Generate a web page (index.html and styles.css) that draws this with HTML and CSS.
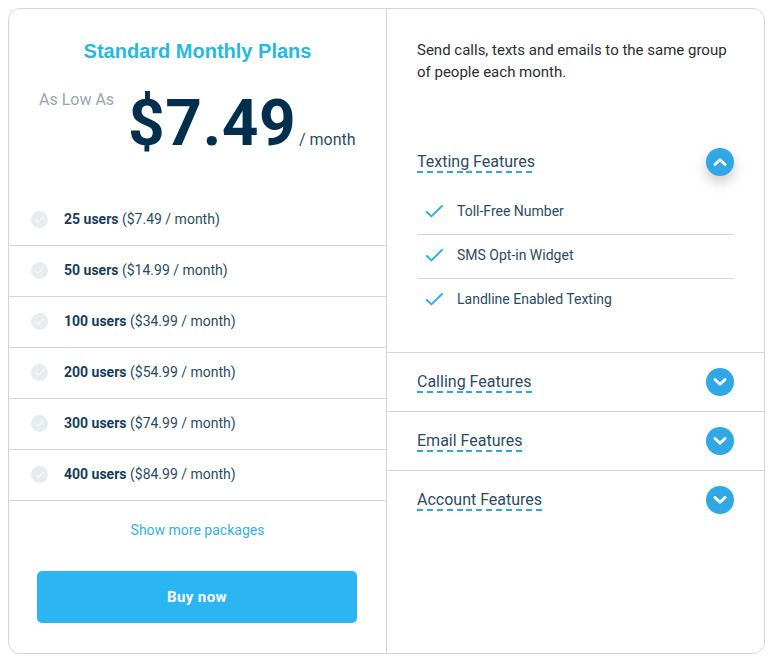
FILE: index.html
```html
<!DOCTYPE html>
<html lang="en">
<head>
  <meta charset="UTF-8">
  <meta name="viewport" content="width=device-width, initial-scale=1.0">
  <title>Standard Monthly Plans</title>
  <link rel="stylesheet" href="styles.css">
</head>
<body>
  <!-- shared icons -->
  <svg class="sprite" width="0" height="0">
    <symbol id="tick" viewBox="0 0 18 14">
      <path d="M1.8 8L6.4 12.4L17 2" />
    </symbol>
    <symbol id="chevron" viewBox="0 0 14 8">
      <path d="M2 1.4L7 6.2L12 1.4" />
    </symbol>
  </svg>

  <div class="pricing">
    <section class="plans">
      <h2>Standard Monthly Plans</h2>
      <div class="price">
        <span class="price-label">As Low As</span>
        <span class="price-value">$7.49</span>
        <span class="price-period">/ month</span>
      </div>

      <ul class="packages">
        <li><span class="dot"><svg><use href="#tick" /></svg></span><p><b>25 users</b> ($7.49 / month)</p></li>
        <li><span class="dot"><svg><use href="#tick" /></svg></span><p><b>50 users</b> ($14.99 / month)</p></li>
        <li><span class="dot"><svg><use href="#tick" /></svg></span><p><b>100 users</b> ($34.99 / month)</p></li>
        <li><span class="dot"><svg><use href="#tick" /></svg></span><p><b>200 users</b> ($54.99 / month)</p></li>
        <li><span class="dot"><svg><use href="#tick" /></svg></span><p><b>300 users</b> ($74.99 / month)</p></li>
        <li><span class="dot"><svg><use href="#tick" /></svg></span><p><b>400 users</b> ($84.99 / month)</p></li>
      </ul>

      <a class="more" href="#">Show more packages</a>
      <button class="buy">Buy now</button>
    </section>

    <section class="features">
      <p class="intro">Send calls, texts and emails to the same group of people each month.</p>

      <div class="group open">
        <div class="group-head">
          <h3>Texting Features</h3>
          <button class="toggle"><svg><use href="#chevron" /></svg></button>
        </div>
        <ul class="checks">
          <li><svg><use href="#tick" /></svg>Toll-Free Number</li>
          <li><svg><use href="#tick" /></svg>SMS Opt-in Widget</li>
          <li><svg><use href="#tick" /></svg>Landline Enabled Texting</li>
        </ul>
      </div>

      <div class="group">
        <div class="group-head">
          <h3>Calling Features</h3>
          <button class="toggle"><svg><use href="#chevron" /></svg></button>
        </div>
      </div>

      <div class="group">
        <div class="group-head">
          <h3>Email Features</h3>
          <button class="toggle"><svg><use href="#chevron" /></svg></button>
        </div>
      </div>

      <div class="group">
        <div class="group-head">
          <h3>Account Features</h3>
          <button class="toggle"><svg><use href="#chevron" /></svg></button>
        </div>
      </div>
    </section>
  </div>

  <script>
    document.querySelectorAll('.toggle').forEach(function (btn) {
      btn.addEventListener('click', function () {
        btn.closest('.group').classList.toggle('open');
      });
    });
  </script>
</body>
</html>
```

FILE: styles.css
```css
* {
  box-sizing: border-box;
}

body {
  margin: 8px;
  background: #fff;
  color: #2b4b63;
  font-family: Roboto, sans-serif;
  font-size: 14px;
}

h2, h3, p, ul {
  margin: 0;
  padding: 0;
}

ul {
  list-style: none;
}

button {
  border: none;
  padding: 0;
  cursor: pointer;
}

svg {
  fill: none;
  stroke-linecap: round;
  stroke-linejoin: round;
}

.sprite {
  position: absolute;
}

.pricing {
  display: flex;
  width: 757px;
  height: 646px;
  border: 1px solid #d3d6d8;
  border-radius: 12px;
}

/* left column */
.plans {
  width: 377px;
  display: flex;
  flex-direction: column;
}

.plans h2 {
  margin-top: 30px;
  color: #27b9dc;
  font-family: "Liberation Sans", Arial, sans-serif;
  font-size: 20px;
  line-height: 24px;
  text-align: center;
}

.price {
  display: flex;
  height: 132px;
  padding: 18px 0 0 30px;
}

.price-label {
  width: 89px;
  padding-top: 9px;
  color: #98a6b0;
  font-size: 16px;
  line-height: 20px;
}

.price-value {
  width: 171px;
  color: #022f4d;
  font-size: 64px;
  font-weight: 700;
  letter-spacing: 0.6px;
  line-height: 86px;
}

.price-period {
  padding-top: 49px;
  font-size: 16px;
  line-height: 20px;
}

.packages li {
  display: flex;
  align-items: center;
  height: 51px;
  padding: 0 0 2px 22px;
  border-bottom: 1px solid #d3d6d8;
}

.packages p {
  line-height: 20px;
}

.packages b {
  color: #173d5a;
  font-weight: 700;
}

.dot {
  display: flex;
  align-items: center;
  justify-content: center;
  width: 17px;
  height: 17px;
  margin: 1px 16px 0 0;
  border-radius: 50%;
  background: #e7ecee;
}

.dot svg {
  width: 9px;
  height: 7px;
  stroke: #f6f9fa;
  stroke-width: 2.4;
}

.more {
  margin-top: 19px;
  color: #35b0e6;
  line-height: 20px;
  text-align: center;
  text-decoration: none;
}

.buy {
  height: 52px;
  margin: 31px 29px 0 28px;
  border-radius: 5px;
  background: #2bb5f3;
  color: #fff;
  font-family: inherit;
  font-size: 15px;
  font-weight: 700;
  letter-spacing: 0.4px;
}

/* right column */
.features {
  flex: 1;
  border-left: 1px solid #d3d6d8;
}

.intro {
  height: 109px;
  margin: 30px 30px 0;
  color: #2b2e31;
  font-size: 15px;
  line-height: 22px;
}

.group + .group {
  border-top: 1px solid #d3d6d8;
}

.group-head {
  display: flex;
  align-items: center;
  justify-content: space-between;
  height: 58px;
  padding: 0 30px;
}

.open .group-head {
  height: 28px;
}

.group h3 {
  padding-bottom: 1px;
  background: repeating-linear-gradient(90deg, #2ba9dc 0 6px, transparent 6px 9.9px) left bottom / 100% 2px no-repeat;
  font-size: 16px;
  font-weight: 400;
  line-height: 21px;
}

.toggle {
  width: 28px;
  height: 28px;
  border-radius: 50%;
  background: #30a8e6;
  box-shadow: 0 0 14px rgba(0, 0, 0, 0.02);
}

.open .toggle {
  box-shadow: 0 6px 14px rgba(0, 0, 0, 0.22);
}

.toggle svg {
  display: block;
  width: 14px;
  height: 8px;
  margin: auto;
  stroke: #fff;
  stroke-width: 2.8;
}

.open .toggle svg {
  transform: rotate(180deg);
}

.checks {
  display: none;
  margin: 0 30px;
  padding: 15px 0 29px;
}

.open .checks {
  display: block;
}

.checks li {
  display: flex;
  align-items: center;
  height: 44px;
  padding-bottom: 3px;
  border-bottom: 1px solid #d3d6d8;
}

.checks li:last-child {
  padding-bottom: 4px;
  border-bottom: none;
}

.checks svg {
  width: 18px;
  height: 14px;
  margin: 0 14px 0 8px;
  stroke: #2fb0e0;
  stroke-width: 2;
}
```
